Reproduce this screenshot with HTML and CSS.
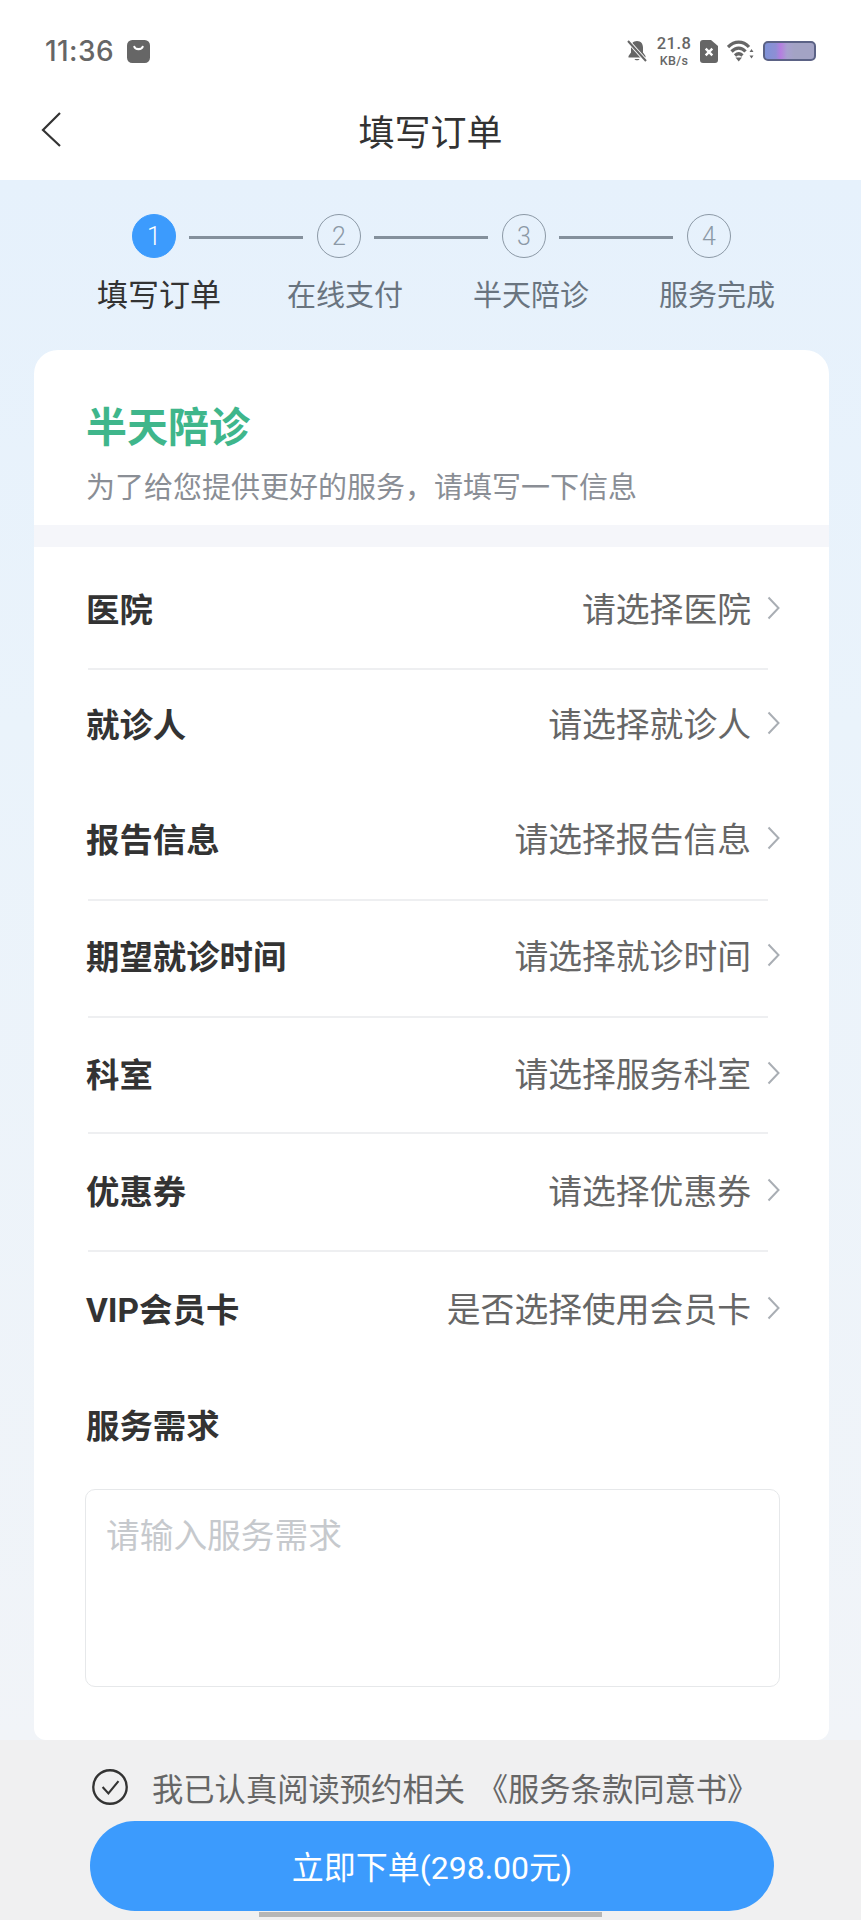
FILE: index.html
```html
<!DOCTYPE html>
<html lang="zh-CN">
<head>
  <meta charset="UTF-8" />
  <title>填写订单</title>
  <link rel="stylesheet" href="styles.css">
</head>
<body>
  <header class="top">
    <div class="status">
      <span class="time">11:36</span>
      <svg class="bag" viewBox="0 0 22 22"><rect width="22" height="22" rx="5" fill="#666"/><path d="M7 6.500c.8 3 7.200 3 8 0" fill="none" stroke="#fff" stroke-width="2" stroke-linecap="round"/></svg>
      <div class="status-right">
        <svg class="bell" viewBox="0 0 20 22"><path d="M10 1c-3.800 0-6 2.800-6 6.500v5L1.500 16v1.500h17V16L16 12.500v-5C16 3.800 13.800 1 10 1z" fill="#666"/><path d="M7.500 19h5c-.3 1.800-4.700 1.800-5 0z" fill="#666"/><path d="M1.500 1.500l17 19" stroke="#fff" stroke-width="4"/><path d="M1 1l18 20" stroke="#666" stroke-width="2"/></svg>
        <div class="speed"><span class="speed-num">21.8</span><span class="speed-unit">KB/s</span></div>
        <svg class="sim" viewBox="0 0 18 23"><path d="M3 0h8l7 6v14a3 3 0 0 1-3 3H3a3 3 0 0 1-3-3V3a3 3 0 0 1 3-3z" fill="#666"/><path d="M5.700 8.700l6.600 6.600M12.300 8.700l-6.600 6.600" stroke="#fff" stroke-width="2.400"/></svg>
        <svg class="wifi" viewBox="0 0 27 22" fill="none" stroke="#666" stroke-width="3.200"><path d="M1 7c6.500-6.500 15-6.500 21 0"/><path d="M4.500 11.500c4.500-4.500 10-4.500 14 0"/><path d="M8 15.500c2.500-2.300 5-2.300 7.500 0"/><path d="M8.500 17.500l3.200 4 3.300-4z" fill="#666" stroke="none"/><path d="M22.500 12l2-3 2 3zM22.500 15.500l2 3 2-3z" fill="#666" stroke="none"/></svg>
        <div class="battery"></div>
      </div>
    </div>
    <div class="nav">
      <svg class="back" viewBox="0 0 20 35"><path d="M19 1L2 18l17 16" fill="none" stroke="#333" stroke-width="2.200"/></svg>
      <h1 class="nav-title">填写订单</h1>
    </div>
  </header>

  <main class="page">
    <div class="steps">
      <div class="track">
        <span class="dot dot-on">1</span><i class="bar"></i>
        <span class="dot">2</span><i class="bar"></i>
        <span class="dot">3</span><i class="bar"></i>
        <span class="dot">4</span>
      </div>
      <div class="step-labels">
        <span class="step-label step-label-on">填写订单</span>
        <span class="step-label">在线支付</span>
        <span class="step-label">半天陪诊</span>
        <span class="step-label">服务完成</span>
      </div>
    </div>

    <section class="card">
      <div class="card-head">
        <h2 class="card-title">半天陪诊</h2>
        <p class="card-sub">为了给您提供更好的服务，请填写一下信息</p>
      </div>
      <div class="band"></div>

      <div class="rows">
        <div class="row"><span class="row-label">医院</span><span class="row-value">请选择医院</span><svg class="chev" viewBox="0 0 13 24"><path d="M1.500 1.500L11.500 12 1.500 22.500" /></svg></div>
        <div class="row"><span class="row-label">就诊人</span><span class="row-value">请选择就诊人</span><svg class="chev" viewBox="0 0 13 24"><path d="M1.500 1.500L11.500 12 1.500 22.500" /></svg></div>
        <div class="row"><span class="row-label">报告信息</span><span class="row-value">请选择报告信息</span><svg class="chev" viewBox="0 0 13 24"><path d="M1.500 1.500L11.500 12 1.500 22.500" /></svg></div>
        <div class="row"><span class="row-label">期望就诊时间</span><span class="row-value">请选择就诊时间</span><svg class="chev" viewBox="0 0 13 24"><path d="M1.500 1.500L11.500 12 1.500 22.500" /></svg></div>
        <div class="row"><span class="row-label">科室</span><span class="row-value">请选择服务科室</span><svg class="chev" viewBox="0 0 13 24"><path d="M1.500 1.500L11.500 12 1.500 22.500" /></svg></div>
        <div class="row"><span class="row-label">优惠券</span><span class="row-value">请选择优惠券</span><svg class="chev" viewBox="0 0 13 24"><path d="M1.500 1.500L11.500 12 1.500 22.500" /></svg></div>
        <div class="row"><span class="row-label">VIP会员卡</span><span class="row-value">是否选择使用会员卡</span><svg class="chev" viewBox="0 0 13 24"><path d="M1.500 1.500L11.500 12 1.500 22.500" /></svg></div>
      </div>

      <div class="needs">
        <div class="row-label">服务需求</div>
        <textarea class="needs-input" placeholder="请输入服务需求"></textarea>
      </div>
    </section>
  </main>

  <footer class="foot">
    <div class="terms">
      <svg class="check" viewBox="0 0 34 34" fill="none" stroke="#333"><circle cx="17" cy="17" r="15.800" stroke-width="2.200"/><path d="M10 17l5.500 6L25 11.500" stroke-width="2"/></svg>
      <span class="terms-text">我已认真阅读预约相关 《服务条款同意书》</span>
    </div>
    <button class="submit" type="button">立即下单(298.00元)</button>
    <div class="home-bar"></div>
  </footer>
</body>
</html>
```

FILE: styles.css
```css
* {
  box-sizing: border-box;
}
body {
  margin: 0;
  width: 861px;
  height: 1920px;
  overflow: hidden;
  font-family: Roboto, "Noto Sans CJK SC", sans-serif;
  color: #333;
  background: #fff;
}
h1, h2, p {
  margin: 0;
  font-weight: 400;
}

/* top */
.top {
  height: 180px;
  background: #fff;
}
.status {
  height: 75px;
  padding: 25px 45px 0 45px;
  display: flex;
  align-items: flex-start;
  color: #666;
}
.time {
  font-family: Inter, sans-serif;
  font-size: 28px;
  font-weight: 500;
  line-height: 50px;
  margin-top: 1px;
  letter-spacing: 0.4px;
}
.bag {
  width: 23px;
  height: 23px;
  margin: 15px 0 0 13px;
}
.status-right {
  margin-left: auto;
  display: flex;
  align-items: center;
  height: 52px;
}
.bell {
  width: 20px;
  height: 22px;
}
.speed {
  margin-left: 10px;
  width: 34px;
  display: flex;
  flex-direction: column;
  align-items: center;
  font-weight: 500;
}
.speed-num {
  font-size: 16.500px;
  line-height: 18px;
  letter-spacing: 0.4px;
}
.speed-unit {
  font-size: 12.500px;
  line-height: 15px;
  letter-spacing: 0.3px;
}
.sim {
  width: 18px;
  height: 23px;
  margin-left: 9px;
}
.wifi {
  width: 27px;
  height: 22px;
  margin-left: 9px;
}
.battery {
  width: 53px;
  height: 20px;
  margin-left: 9px;
  border: 2px solid #5b6285;
  border-radius: 5px;
  background: linear-gradient(90deg, #7f92d8 0, #8e8fd4 22%, #b57ee0 32%, #a8a0d0 45%, #a3a3c4 60%, #a3a3c4 100%);
}
.nav {
  height: 105px;
  position: relative;
  text-align: center;
}
.back {
  position: absolute;
  left: 41px;
  top: 37px;
  width: 20px;
  height: 35px;
}
.nav-title {
  font-size: 36px;
  line-height: 118px;
  color: #333;
}

/* steps + background */
.page {
  height: 1560px;
  background: linear-gradient(180deg, #e6f1fc 0, #eaf3fb 35%, #f1f4f8 100%);
  padding-top: 34px;
}
.steps {
  height: 136px;
}
.track {
  display: flex;
  align-items: center;
  padding-left: 132px;
}
.dot {
  width: 44px;
  height: 44px;
  flex: none;
  border: 1.500px solid #8c99a6;
  border-radius: 50%;
  display: flex;
  align-items: center;
  justify-content: center;
  font-weight: 300;
  font-size: 25px;
  color: #8c99a6;
}
.dot-on {
  background: #3c9bfd;
  border-color: #3c9bfd;
  color: #fff;
}
.bar {
  width: 114px;
  height: 3px;
  margin: 2px 14px 0 13px;
  background: #84909c;
}
.step-labels {
  display: flex;
  padding-left: 66px;
  margin-top: 18px;
}
.step-label {
  width: 186px;
  text-align: center;
  font-size: 29px;
  line-height: 40px;
  color: #69747f;
}
.step-label-on {
  font-size: 31px;
  color: #333;
}

/* card */
.card {
  margin: 0 32px 0 34px;
  height: 1390px;
  background: #fff;
  border-radius: 24px 24px 12px 12px;
}
.card-head {
  padding: 54px 52px 17px;
}
.card-title {
  font-size: 41px;
  line-height: 48px;
  font-weight: 700;
  color: #3fb68b;
}
.card-sub {
  margin-top: 16px;
  font-size: 29px;
  line-height: 40px;
  color: #8a8e95;
}
.band {
  height: 22px;
  background: #f5f6fa;
}
.row {
  margin: 0 61px 0 54px;
  display: flex;
  align-items: center;
  border-bottom: 2px solid #eeeff1;
}
.row:nth-child(1) { height: 123px; padding-top: 4px; }
.row:nth-child(2) { height: 110px; border-bottom: 0; }
.row:nth-child(3) { height: 121px; }
.row:nth-child(4) { height: 117px; padding-bottom: 3px; }
.row:nth-child(5) { height: 116px; }
.row:nth-child(6) { height: 118px; }
.row:nth-child(7) { height: 116px; border-bottom: 0; }
.row-label {
  margin-left: -2px;
  padding-top: 2px;
  font-size: 33.400px;
  line-height: 40px;
  font-weight: 700;
  color: #333;
}
.row-value {
  margin-left: auto;
  padding-top: 2px;
  font-size: 33.800px;
  line-height: 40px;
  color: #666;
}
.chev {
  width: 13px;
  height: 24px;
  flex: none;
  margin: -4px -12px 0 16px;
  fill: none;
  stroke: #a9aeb4;
  stroke-width: 2;
}
.needs {
  padding: 37px 49px 0 54px;
}
.needs-input {
  display: block;
  width: 695px;
  height: 198px;
  margin: 42px 0 0 -3px;
  padding: 24px 20px;
  border: 1px solid #e6e8ea;
  border-radius: 10px;
  font-family: "Noto Sans CJK SC", sans-serif;
  font-size: 33.700px;
  line-height: 40px;
  resize: none;
  outline: none;
  background: #fff;
}
.needs-input::placeholder {
  color: #c6c9cd;
}

/* bottom */
.foot {
  position: relative;
  height: 180px;
  background: #f0f0f1;
  padding: 27px 87px 0 90px;
}
.terms {
  display: flex;
  align-items: center;
  height: 40px;
  font-size: 31.300px;
  color: #666;
}
.terms-text {
  word-spacing: 4px;
}
.check {
  width: 36px;
  height: 36px;
  margin: 0 24px 0 2px;
  flex: none;
}
.submit {
  display: block;
  width: 684px;
  height: 90px;
  margin-top: 14px;
  padding: 0 0 3px;
  border: 0;
  border-radius: 45px;
  background: #3c9bfd;
  color: #fff;
  font-family: Roboto, "Noto Sans CJK SC", sans-serif;
  font-size: 32px;
}
.home-bar {
  position: absolute;
  left: 259px;
  bottom: 3px;
  width: 343px;
  height: 5px;
  background: #b6b6b6;
}
```
